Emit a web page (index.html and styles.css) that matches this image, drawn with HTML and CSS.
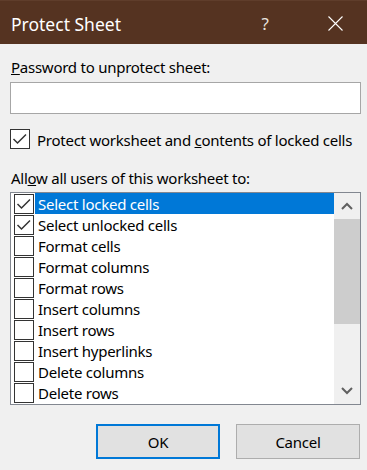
FILE: index.html
```html
<!DOCTYPE html>
<html>
<head>
<meta charset="utf-8">
<link rel="stylesheet" href="styles.css">
</head>
<body>
<div class="dialog">
  <div class="titlebar">
    <span class="title">Protect Sheet</span>
    <span class="help">?</span>
    <svg class="close" width="15" height="15" viewBox="0 0 15 15"><path d="M0.5 0.5 L14.5 14.5 M14.5 0.5 L0.5 14.5" stroke="#ffffff" stroke-width="1.1" fill="none"/></svg>
  </div>
  <div class="content">
    <div class="label pw-label"><u>P</u>assword to unprotect sheet:</div>
    <div class="input"></div>
    <div class="check-line">
      <span class="box"><svg width="18" height="18" viewBox="0 0 18 18"><path d="M2.5 9 L6.5 13 L15 4.5" stroke="#333" stroke-width="1.5" fill="none"/></svg></span>
      <span class="check-text">Protect worksheet and <u>c</u>ontents of locked cells</span>
    </div>
    <div class="label allow-label">All<u>o</u>w all users of this worksheet to:</div>
    <div class="listbox">
      <div class="items">
        <div class="row"><span class="box"><svg width="18" height="18" viewBox="0 0 18 18"><path d="M2.5 9 L6.5 13 L15 4.5" stroke="#333" stroke-width="1.5" fill="none"/></svg></span><span class="item selected">Select locked cells</span></div>
        <div class="row"><span class="box"><svg width="18" height="18" viewBox="0 0 18 18"><path d="M2.5 9 L6.5 13 L15 4.5" stroke="#333" stroke-width="1.5" fill="none"/></svg></span><span class="item">Select unlocked cells</span></div>
        <div class="row"><span class="box"></span><span class="item">Format cells</span></div>
        <div class="row"><span class="box"></span><span class="item">Format columns</span></div>
        <div class="row"><span class="box"></span><span class="item">Format rows</span></div>
        <div class="row"><span class="box"></span><span class="item">Insert columns</span></div>
        <div class="row"><span class="box"></span><span class="item">Insert rows</span></div>
        <div class="row"><span class="box"></span><span class="item">Insert hyperlinks</span></div>
        <div class="row"><span class="box"></span><span class="item">Delete columns</span></div>
        <div class="row"><span class="box"></span><span class="item">Delete rows</span></div>
      </div>
      <div class="scrollbar">
        <div class="arrow"><svg width="12" height="8" viewBox="0 0 12 8"><path d="M1 7 L6 2 L11 7" stroke="#606060" stroke-width="2" fill="none"/></svg></div>
        <div class="track">
          <div class="thumb"></div>
        </div>
        <div class="arrow"><svg width="12" height="8" viewBox="0 0 12 8"><path d="M1 1 L6 6 L11 1" stroke="#606060" stroke-width="2" fill="none"/></svg></div>
      </div>
    </div>
    <div class="buttons">
      <div class="btn ok">OK</div>
      <div class="btn">Cancel</div>
    </div>
  </div>
</div>
</body>
</html>
```
FILE: styles.css
```css
html, body {
  margin: 0;
  padding: 0;
}
body {
  width: 367px;
  height: 470px;
  background: #f0f0f0;
  font-family: "Noto Sans", "Open Sans", sans-serif;
  font-size: 15px;
  letter-spacing: -0.25px;
  color: #000;
  overflow: hidden;
}
.dialog {
  display: flex;
  flex-direction: column;
}
.titlebar {
  height: 44px;
  background: #553321;
  border-top: 1px solid #5f3d2b;
  box-sizing: border-box;
  display: flex;
  align-items: center;
  color: #fff;
  letter-spacing: 0;
}
.title {
  font-size: 17.5px;
  margin-left: 11px;
  flex: 1;
  margin-top: 2px;
}
.help {
  font-size: 17px;
  color: #e8e2de;
  margin-right: 59px;
  margin-top: 1px;
}
.close {
  margin-right: 24px;
  margin-top: 1px;
}
.content {
  padding: 0 6px 0 10px;
  display: flex;
  flex-direction: column;
}
.label {
  line-height: 20px;
  padding-left: 1px;
  white-space: nowrap;
}
.pw-label {
  margin-top: 13px;
}
.input {
  margin-top: 5px;
  height: 32px;
  width: 351px;
  box-sizing: border-box;
  background: #fff;
  border: 1px solid #a6a6a6;
}
.check-line {
  margin-top: 15px;
  display: flex;
  align-items: center;
  height: 20px;
  white-space: nowrap;
}
.box {
  width: 20px;
  height: 20px;
  box-sizing: border-box;
  border: 1px solid #333;
  background: #fff;
  display: flex;
  align-items: center;
  justify-content: center;
  flex: none;
}
.check-text {
  margin-left: 7px;
  margin-top: 1px;
}
.allow-label {
  margin-top: 19px;
}
.listbox {
  margin-top: 4px;
  width: 351px;
  height: 213px;
  box-sizing: border-box;
  border: 1px solid #828790;
  background: #fff;
  display: flex;
}
.items {
  flex: 1;
  padding-left: 3px;
}
.row {
  height: 21px;
  display: flex;
  align-items: flex-start;
}
.row .box {
  margin-top: 1px;
}
.item {
  flex: 1;
  height: 21px;
  box-sizing: border-box;
  line-height: 19px;
  padding-top: 2px;
  padding-left: 3px;
  margin-left: 1px;
  white-space: nowrap;
}
.item.selected {
  background: #0078d7;
  color: #fff;
}
.scrollbar {
  width: 26px;
  background: #f0f0f0;
  display: flex;
  flex-direction: column;
}
.arrow {
  height: 26px;
  display: flex;
  align-items: center;
  justify-content: center;
}
.track {
  flex: 1;
}
.thumb {
  height: 105px;
  background: #cdcdcd;
}
.buttons {
  margin-top: 19px;
  display: flex;
  justify-content: flex-end;
  gap: 16px;
  padding-right: 1px;
}
.btn {
  width: 124px;
  height: 35px;
  box-sizing: border-box;
  border: 1px solid #adadad;
  background: #e1e1e1;
  display: flex;
  align-items: center;
  justify-content: center;
}
.btn.ok {
  border: 2px solid #0078d7;
}
```
